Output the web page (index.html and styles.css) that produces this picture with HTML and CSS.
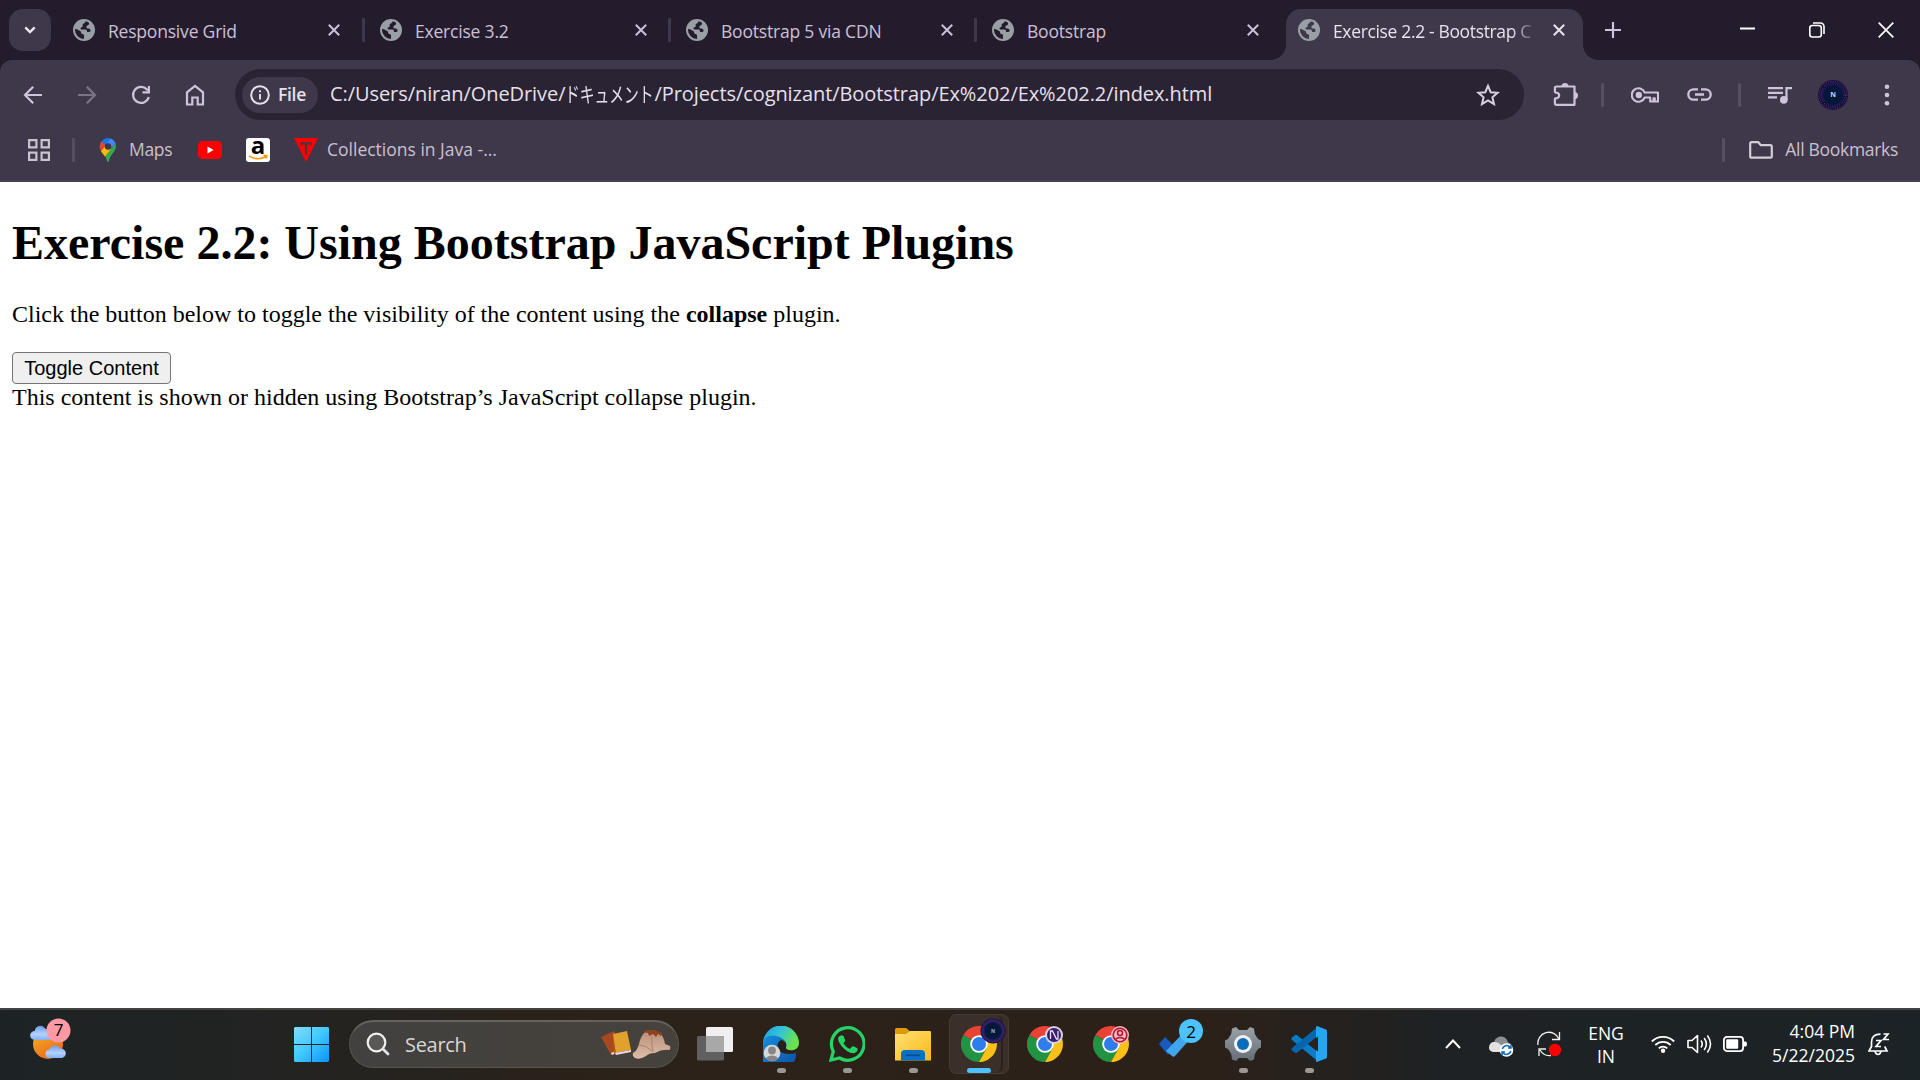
FILE: index.html
```html
<!DOCTYPE html>
<html lang="en">
<head>
<meta charset="utf-8">
<title>Exercise 2.2 - Bootstrap Collapse</title>
<link rel="stylesheet" href="styles.css">
</head>
<body>
<svg class="defs" width="0" height="0" aria-hidden="true">
  <defs>
    <linearGradient id="winA" x1="0" y1="0" x2="1" y2="1"><stop offset="0" stop-color="#82dcff"/><stop offset=".5" stop-color="#3fc8fd"/><stop offset="1" stop-color="#0a93f8"/></linearGradient>
    <linearGradient id="sun" x1="0" y1="0" x2=".6" y2="1"><stop offset="0" stop-color="#f5b52e"/><stop offset="1" stop-color="#ee6a12"/></linearGradient>
    <linearGradient id="cloud" x1="0" y1="0" x2="0" y2="1"><stop offset="0" stop-color="#6f9dea"/><stop offset=".6" stop-color="#b3d2fb"/><stop offset="1" stop-color="#84aef0"/></linearGradient>
    <linearGradient id="edgeTop" x1="0" y1="0" x2="1" y2=".4"><stop offset="0" stop-color="#1d9be0"/><stop offset=".5" stop-color="#33c3d8"/><stop offset="1" stop-color="#6be44a"/></linearGradient>
    <linearGradient id="edgeBody" x1="0" y1="0" x2="1" y2="1"><stop offset="0" stop-color="#1690e0"/><stop offset="1" stop-color="#0b4a9c"/></linearGradient>
    <linearGradient id="fold" x1="0" y1="0" x2="1" y2="1"><stop offset="0" stop-color="#ffe07a"/><stop offset="1" stop-color="#fcb912"/></linearGradient>
    <linearGradient id="gear" x1="0" y1="0" x2="0" y2="1"><stop offset="0" stop-color="#9aa1a7"/><stop offset="1" stop-color="#656e76"/></linearGradient>
    <linearGradient id="skin" x1="0" y1="0" x2="0" y2="1"><stop offset="0" stop-color="#b98d77"/><stop offset="1" stop-color="#dfbda9"/></linearGradient>
    <radialGradient id="ava"><stop offset="0" stop-color="#02183a"/><stop offset=".6" stop-color="#04183c"/><stop offset=".85" stop-color="#3c2270"/><stop offset="1" stop-color="#120f38"/></radialGradient>
    <symbol id="globe" viewBox="0 0 22 22"><circle cx="11" cy="11" r="10" fill="none" stroke="#98a0a6" stroke-width="2"/><path fill="#98a0a6" d="M11 1h2c-.5 2.500-1.500 3.500-3.300 4v2.300c0 1-1.700 1-2.200 1.700-.3.800.5 1.500 1.500 1.500h3.500c1.500 0 1.500 1.500 1.500 2.500h2.200c1.200 0 1.500-1 1.300-2-.3-1.200-1.500-1.500-3-1.500-1.200-.2-1.500-1.500-.8-2.500.8-1 2.300-.8 2.300-2V2.500l4 3.500 1.500 5-2 6-5 3.500-3.500.5v-3c0-1 .5-2-.5-2.500-1.500-.5-2.500-1-2.500-2.500 0-1.200-2-1-3.500-2.500L1 9.500 3 4.500 7 1.500z"/></symbol>
    <symbol id="x" viewBox="0 0 12 12"><path d="M.8.8l10.400 10.400M11.200.8L.8 11.200" stroke="currentColor" stroke-width="2" fill="none"/></symbol>
    <symbol id="chrome" viewBox="0 0 36 36"><path fill="#ea4335" d="M18 18L2.400 9A18 18 0 0 1 33.600 9z"/><path fill="#229342" d="M18 18l7.800 4.500L18 36A18 18 0 0 1 2.400 9z"/><path fill="#fbc116" d="M18 9.500h15.800A18 18 0 0 1 18 36l7.500-13.500z"/><circle cx="18" cy="18" r="8.800" fill="#fff"/><circle cx="18" cy="18" r="7" fill="#2f7ded"/></symbol>
  </defs>
</svg>

<header class="browser">
  <div class="tabstrip">
    <div class="tab-search"><svg width="12" height="8" viewBox="0 0 12 8"><path d="M1.300 1.300L6 6l4.700-4.700" fill="none" stroke="#ece6f2" stroke-width="2.400"/></svg></div>
    <div class="tab"><svg class="favicon"><use href="#globe"/></svg><span class="tab-title">Responsive Grid</span><svg class="tab-close"><use href="#x"/></svg></div>
    <i class="tab-sep"></i>
    <div class="tab"><svg class="favicon"><use href="#globe"/></svg><span class="tab-title">Exercise 3.2</span><svg class="tab-close"><use href="#x"/></svg></div>
    <i class="tab-sep"></i>
    <div class="tab"><svg class="favicon"><use href="#globe"/></svg><span class="tab-title">Bootstrap 5 via CDN</span><svg class="tab-close"><use href="#x"/></svg></div>
    <i class="tab-sep"></i>
    <div class="tab"><svg class="favicon"><use href="#globe"/></svg><span class="tab-title">Bootstrap</span><svg class="tab-close"><use href="#x"/></svg></div>
    <i class="tab-sep hidden"></i>
    <div class="tab active"><svg class="favicon"><use href="#globe"/></svg><span class="tab-title">Exercise 2.2 - Bootstrap C</span><svg class="tab-close"><use href="#x"/></svg></div>
    <svg class="new-tab" width="16" height="16" viewBox="0 0 16 16"><path d="M8 0v16M0 8h16" stroke="#cfc3dc" stroke-width="2.200"/></svg>
    <div class="window-controls">
      <svg width="15" height="15"><path d="M0 7.500h15" stroke="#fff" stroke-width="2"/></svg>
      <svg width="16" height="16" viewBox="0 0 16 16" fill="none" stroke="#fff" stroke-width="1.600"><rect x=".8" y="3.500" width="11.500" height="11.500" rx="2.500"/><path d="M4 1h7.500a3.500 3.500 0 0 1 3.500 3.500V12"/></svg>
      <svg width="16" height="16" viewBox="0 0 16 16"><path d="M.7.7l14.600 14.600M15.300.7L.7 15.300" stroke="#fff" stroke-width="1.700"/></svg>
    </div>
  </div>

  <div class="toolbar">
    <div class="nav">
      <svg width="20" height="20" viewBox="0 0 20 20"><path d="M19 10H2.500M10.200 1.800L2 10l8.200 8.200" fill="none" stroke="#cfc3dc" stroke-width="2.200"/></svg>
      <svg width="20" height="20" viewBox="0 0 20 20"><path d="M1 10h16.500M9.800 1.800L18 10l-8.200 8.200" fill="none" stroke="#7d7387" stroke-width="2.200"/></svg>
      <svg width="20" height="20" viewBox="0 0 20 20"><path d="M17.800 12A8 8 0 1 1 16 4.500l1 1" fill="none" stroke="#cfc3dc" stroke-width="2.200"/><path d="M19 1v7.500h-7.500V6.300h5.300V1z" fill="#cfc3dc"/></svg>
      <svg width="20" height="22" viewBox="0 0 20 22"><path d="M2 20.500V8.300L10 2l8 6.300v12.200h-5.300v-7H7.300v7z" fill="none" stroke="#cfc3dc" stroke-width="2.200"/></svg>
    </div>
    <div class="omnibox">
      <div class="chip"><svg width="20" height="20" viewBox="0 0 20 20"><circle cx="10" cy="10" r="8.800" fill="none" stroke="#e7e0ec" stroke-width="2"/><path d="M10 9v5.500M10 5.200v2" stroke="#e7e0ec" stroke-width="1.900"/></svg><span>File</span></div>
      <div class="url">C:/Users/niran/OneDrive/<span class="kana"><span>ドキュメント</span></span>/Projects/cognizant/Bootstrap/Ex%202/Ex%202.2/index.html</div>
      <svg class="star" width="24" height="24" viewBox="0 0 24 24"><path d="M12 2.800l2.700 6.400 6.900.6-5.200 4.500 1.600 6.800-6-3.600-6 3.600 1.600-6.800-5.200-4.500 6.900-.6z" fill="none" stroke="#d9d0e0" stroke-width="2"/></svg>
    </div>
    <div class="actions">
      <svg class="puzzle" width="26" height="26" viewBox="0 0 26 26"><path d="M3.500 4.500h18v18.300h-18q-1.600 0-1.600-1.600v-4.500q4.300-.8 4.300-3.300t-4.300-3.300V6q0-1.500 1.600-1.500z" fill="none" stroke="#cfc3dc" stroke-width="2.200" stroke-linejoin="round"/><path d="M8.500 4.500a3.500 3.500 0 0 1 7 0zM21.500 10a3.500 3.500 0 0 1 0 7z" fill="#cfc3dc"/></svg>
      <i class="bar-sep"></i>
      <svg class="key" width="28" height="16" viewBox="0 0 28 16"><path d="M13.700 5.500A6.700 6.700 0 1 0 13.700 10.500h5.500v4h3.300v-3.200h1.300v3.200H27v-9z" fill="none" stroke="#cfc3dc" stroke-width="2.100" stroke-linejoin="round"/><circle cx="7.800" cy="8" r="3.200" fill="#cfc3dc"/></svg>
      <svg class="link" width="25" height="13" viewBox="0 0 25 13"><path d="M11 1.300H6.500a5.200 5.200 0 0 0 0 10.400H11M14 1.300h4.500a5.200 5.200 0 0 1 0 10.400H14M8 6.500h9" fill="none" stroke="#cfc3dc" stroke-width="2.300"/></svg>
      <i class="bar-sep"></i>
      <svg class="media" width="24" height="18" viewBox="0 0 24 18"><path d="M0 2.200h15M0 6.800h15M0 11.400h9M18.500 14V2.200H24" fill="none" stroke="#cfc3dc" stroke-width="2.200"/><circle cx="15.800" cy="13.900" r="3.800" fill="#cfc3dc"/></svg>
      <svg class="avatar" width="30" height="30" viewBox="0 0 30 30"><circle cx="15" cy="15" r="15" fill="#120f38"/><circle cx="15" cy="15" r="9.500" fill="#02183a"/><g fill="none" stroke="#6d3292" stroke-width="1" stroke-dasharray="1 1.300"><circle cx="15" cy="15" r="13.800"/><circle cx="15" cy="15" r="12"/><circle cx="15" cy="15" r="10.300" stroke="#35377c"/></g><text x="15" y="17.200" text-anchor="middle" class="avatar-n">N</text></svg>
      <svg class="dots" width="6" height="22" viewBox="0 0 6 22" fill="#cfc3dc"><circle cx="3" cy="2.700" r="2.300"/><circle cx="3" cy="11" r="2.300"/><circle cx="3" cy="19.300" r="2.300"/></svg>
    </div>
  </div>

  <div class="bookmarks">
    <svg class="apps-icon" width="22" height="22" viewBox="0 0 22 22" fill="none" stroke="#c9c1cd" stroke-width="2.200"><path d="M1.100 1.100h7.300v7.300H1.100zM13.600 1.100h7.300v7.300h-7.300zM1.100 13.600h7.300v7.300H1.100zM13.600 13.600h7.300v7.300h-7.300z"/></svg>
    <i class="bar-sep"></i>
    <div class="bm maps">
      <svg width="18" height="24" viewBox="0 0 18 24"><path fill="#34a853" d="M16.500 5.500c1.500 5-1 8-4 11.500-1.500 2-2 4-2.500 6q-1 2-2 0c-.5-2-1-3.500-2-5z"/><path fill="#fbbc04" d="M1.800 13L6 8l6 3-6 7.500Q3.500 15.500 1.800 13z"/><path fill="#ea4335" d="M2.500 3.200L7 7l-5 6C0 9.500.3 6 2.500 3.200z"/><path fill="#1a73e8" d="M2.500 3.200A8.200 8.200 0 0 1 11.500.5L6.200 7.300z"/><path fill="#4285f4" d="M11.500.5q3.800 1.300 5.200 5.200L11 11 7 6z"/><circle cx="9" cy="8.500" r="3.200" fill="#3f374a"/></svg>
      <span>Maps</span>
    </div>
    <svg class="yt" width="24" height="18" viewBox="0 0 24 18"><rect width="24" height="18" rx="4.500" fill="#f00"/><path d="M9.500 5.500v7L15.500 9z" fill="#fff"/></svg>
    <svg class="amazon" width="24" height="24" viewBox="0 0 24 24"><rect width="24" height="24" rx="3" fill="#fff"/><text x="12" y="15.500" text-anchor="middle" class="amazon-a">a</text><path d="M3 17.800q8.500 5.500 17 .7M17.500 17.300l3.300.3-.8 3" fill="none" stroke="#ff9900" stroke-width="1.600"/></svg>
    <div class="bm java">
      <svg width="24" height="24" viewBox="0 0 24 24"><path d="M0 0h24L12 24z" fill="#f00"/><path d="M6.500 5.300h11M12 5v11.500" stroke="#4c3340" stroke-width="2.200" fill="none"/><path d="M7 4.500v3M17 4.500v3" stroke="#4c3340"/></svg>
      <span>Collections in Java -...</span>
    </div>
    <div class="all">
      <i class="bar-sep"></i>
      <svg width="24" height="18" viewBox="0 0 24 18"><path d="M2.500 1.200h6.800l2.500 2.900h9.700q1.300 0 1.300 1.300v10q0 1.300-1.300 1.300h-19q-1.300 0-1.300-1.300V2.500q0-1.300 1.300-1.300z" fill="none" stroke="#d4ccd8" stroke-width="2.200"/></svg>
      <span>All Bookmarks</span>
    </div>
  </div>
</header>

<main class="page">
  <h1>Exercise 2.2: Using Bootstrap JavaScript Plugins</h1>
  <p>Click the button below to toggle the visibility of the content using the <strong>collapse</strong> plugin.</p>
  <button class="toggle" type="button">Toggle Content</button>
  <div>This content is shown or hidden using Bootstrap’s JavaScript collapse plugin.</div>
</main>

<footer class="taskbar">
  <svg class="weather" width="42" height="44" viewBox="0 0 42 44">
    <circle cx="18" cy="26" r="15" fill="url(#sun)"/>
    <path d="M4.500 22a4.500 4.500 0 0 1 .3-9A5.500 5.500 0 0 1 15 10.500q8 2 8 11.500z" fill="url(#cloud)"/>
    <path d="M19 40a4.300 4.300 0 0 1 .2-8.500 6 6 0 0 1 11-.8A4.700 4.700 0 0 1 32 40z" fill="url(#cloud)"/>
    <circle cx="28.500" cy="12.500" r="12" fill="#ff99a4"/><text x="28.500" y="18" text-anchor="middle" class="badge-text">7</text>
  </svg>
  <svg class="start" width="35" height="35" viewBox="0 0 35 35" fill="url(#winA)"><path d="M1 0h16v17H0V1zM18 0h16l1 1v16H18zM0 18h17v17H1l-1-1zM18 18h17v16l-1 1H18z"/></svg>
  <div class="search">
    <svg width="24" height="24" viewBox="0 0 24 24"><circle cx="10.500" cy="10.500" r="8.800" fill="#5a5856" stroke="#f0f0f0" stroke-width="2.200"/><path d="M17 17l5 5" stroke="#e2e4ea" stroke-width="2.800" stroke-linecap="round"/></svg>
    <span>Search</span>
    <svg class="art" width="72" height="32" viewBox="0 0 72 32">
      <path d="M1 9L14 3l9 17-12 7z" fill="#a8481f"/><path d="M11 25l11-5 1 2-11 5z" fill="#f1dccb"/>
      <path d="M13 6l14-3 4 19-16 3z" fill="#e2a02c"/><path d="M13 6l3 19-2 1z" fill="#a8651c"/><path d="M15 25l16-3v2l-15 3z" fill="#ecd5e8"/>
      <path d="M33 25q4-2 6-9Q42 2 52 2q11 1 13 14l5 2q1 3-1 4-7-1-14 3-6 0-9 3-6 4-11 2-3-2-2-5z" fill="url(#skin)"/>
      <path d="M52 8q-1 8 1 16M39 17q7 0 13 6" stroke="#a98370" fill="none"/><path d="M43 4q8-5 19 1l-1 3-3-2-2 3-3-3-4 2-1-3z" fill="#8a431e"/>
    </svg>
  </div>
  <nav class="apps">
    <div class="app"><svg width="36" height="36" viewBox="0 0 36 36"><rect x="9" y="1" width="27" height="25" rx="1.500" fill="#efefef"/><rect x="0" y="10" width="27" height="24.500" rx="1.500" fill="#606060"/><path d="M9 10h16.500q1.500 0 1.500 1.500V26H9z" fill="#a8a8a8"/></svg></div>
    <div class="app running"><svg width="36" height="36" viewBox="0 0 36 36"><path d="M0 18A18 18 0 0 1 36 17c0 5-4 7.500-8 7.500-4 0-5.500-1-5-3 2-5-3-10-10-10S1 14 0 18z" fill="url(#edgeTop)"/><path d="M0 18C0 11 7 8.500 13 10c6 1 10 5 9 9-2-4-7-2-7 2 0 6 9 8.500 18 6A18 18 0 1 1 0 18z" fill="url(#edgeBody)"/><path d="M18 14q5 1 4.500 6.500-.5 3 5.500 4 3 0 5-1.500-1 4-6 4-11-.5-12.500-6.500 0-5 3.500-6.500z" fill="#262019"/><circle cx="9" cy="27" r="8.300" fill="#d8d8d8"/><circle cx="9" cy="24.500" r="3.900" fill="#868686"/><path d="M2.800 32.500q2-3 6.200-3t6.200 3Q12.800 35.300 9 35.300t-6.200-2.800z" fill="#868686"/></svg></div>
    <div class="app running"><svg width="36" height="36" viewBox="0 0 36 36"><path d="M2 34l2.300-8.500A16.300 16.300 0 1 1 10.500 32z" fill="none" stroke="#25d366" stroke-width="3.200"/><path d="M11.500 9.500h2q.8 0 1.200 1l1.500 3.500q.2.800-.4 1.500l-1.400 1.700q2.400 4 6.500 5.800l2-2.300q.7-.8 1.500-.4l3.500 1.700q.8.400.7 1.300-.4 3.700-4.600 4Q19 27.500 12.500 20 6 11.500 11.500 9.500z" fill="#25d366"/></svg></div>
    <div class="app running"><svg width="36" height="36" viewBox="0 0 36 36"><path d="M0 3.500Q0 2 1.500 2h9q1 0 1.700.7L15 5.500 12 9H0z" fill="#dd9b07"/><path d="M0 8h11l4-3h20q1 0 1 1v28.500H0z" fill="url(#fold)"/><path d="M6 34.500V28q0-4 4-4h16q4 0 4 4v6.500z" fill="#0d6fc4"/><path d="M11 29.300h14" stroke="#084b8a" stroke-width="1.500"/></svg></div>
    <div class="app current"><div class="window-stack"><div class="window-front"><svg width="46" height="44" viewBox="0 0 46 44"><use href="#chrome" x="0" y="8" width="36" height="36"/><circle cx="32" cy="13" r="12.500" fill="url(#ava)"/><text x="32" y="15" text-anchor="middle" class="mini-n">N</text></svg></div></div></div>
    <div class="app"><svg width="36" height="36" viewBox="0 0 36 36"><use href="#chrome" width="36" height="36"/><circle cx="27" cy="9" r="9" fill="#d8d3e4"/><circle cx="27" cy="9" r="7" fill="#3b1c6b"/><path d="M23.500 13V5h2l4 8h1.500V5" fill="none" stroke="#e8e0f4" stroke-width="1.300"/></svg></div>
    <div class="app"><svg width="36" height="36" viewBox="0 0 36 36"><use href="#chrome" width="36" height="36"/><circle cx="27" cy="9" r="9" fill="#f6b9c4"/><circle cx="27" cy="9" r="6.800" fill="none" stroke="#b3122d" stroke-width="1.600"/><circle cx="27" cy="7" r="2.500" fill="none" stroke="#b3122d" stroke-width="1.500"/><path d="M22 13.500q5-4 10 0" fill="none" stroke="#b3122d" stroke-width="1.600"/></svg></div>
    <div class="app todo"><svg width="45" height="44" viewBox="0 0 45 44"><path d="M0 26l6-7 9 9-6 9z" fill="#185abd"/><path d="M7 33L25 14l7 6-16 18q-1.500 1.500-3 0z" fill="#41a5ee"/><circle cx="32" cy="13" r="12" fill="#4cc2ff"/><text x="32" y="19.500" text-anchor="middle" class="badge-text">2</text></svg></div>
    <div class="app running"><svg width="36" height="36" viewBox="0 0 36 36"><path d="M7 2.500l4-1.500 3 3h8l3-3 4 1.500.8 5.500 3.200 5 3 1.500v7L33 23l-3.200 5-.8 5.500-4 1.500-3-3h-8l-3 3-4-1.500L6.200 28 3 23l-3-1.500v-7L3 13l3.200-5z" fill="url(#gear)"/><circle cx="18" cy="18" r="9" fill="#f2f2f2"/><circle cx="18" cy="18" r="6" fill="#0f6cbd"/></svg></div>
    <div class="app running"><svg width="36" height="36" viewBox="0 0 36 36"><path d="M1 11.500L4 9.200q1-.7 2 0L27 26v9.500L1 14q-1.300-1.300 0-2.500z" fill="#0a7dc9"/><path d="M1 24.500L4 26.800q1 .7 2 0L27 10V.5L1 22q-1.300 1.300 0 2.500z" fill="#0765ae"/><path d="M26 0l9 3.500q1 .5 1 1.500v26q0 1-1 1.500L26 36q-1 0-1-1V1q0-1 1-1z" fill="#25a6f2"/><path d="M27 10.500v15L17 18z" fill="#2c211a"/></svg></div>
  </nav>
  <div class="tray">
    <svg class="chev" width="16" height="10" viewBox="0 0 16 10"><path d="M1 9l7-7.500L15 9" fill="none" stroke="#fff" stroke-width="2"/></svg>
    <svg class="drive" width="25" height="22" viewBox="0 0 25 22"><path d="M5 7Q7 1 13 1.500q5 1 6 6 4 1 4 5l-5 4H4q-4-1-4-4.500Q1 7 5 7z" fill="#8b8d8f"/><path d="M5 7q4-.5 7 3l5 7H4q-4-1-4-4.500Q1 7 5 7z" fill="#e2e2e2"/><circle cx="17.500" cy="15" r="6.800" fill="#fff"/><path d="M13.300 14a4.500 4.500 0 0 1 8-1.500M21.800 16a4.500 4.500 0 0 1-8 1.500M22 10v3h-3M13 20v-3h3" fill="none" stroke="#0f6cbd" stroke-width="1.500"/></svg>
    <svg class="sync" width="25" height="26" viewBox="0 0 25 26"><path d="M1 14A11 11 0 0 1 22 8M22.500 1v7.500H15M14 24.500Q7 25.500 3 19M2 25v-7h7" fill="none" stroke="#f0f0f0" stroke-width="1.300"/><circle cx="18" cy="19" r="6.200" fill="#f00"/></svg>
    <div class="lang">ENG<br>IN</div>
    <svg class="wifi" width="24" height="18" viewBox="0 0 24 18" fill="none" stroke="#fff" stroke-width="1.800"><path d="M.8 6.500a15.800 15.800 0 0 1 22.400 0M4.300 10a10.900 10.900 0 0 1 15.400 0M7.700 13.300a6.100 6.100 0 0 1 8.600 0"/><circle cx="12" cy="15.800" r="1.300" fill="#fff"/></svg>
    <svg class="vol" width="25" height="20" viewBox="0 0 25 20" fill="none" stroke="#fff" stroke-width="1.600"><path d="M1 6.500h4l5.500-5v17L5 13.500H1z" stroke-linejoin="round"/><path d="M14 6.500q2.500 3.500 0 7M17.200 4q4.300 6 0 12M20.400 1.500q6.300 8.500 0 17"/></svg>
    <svg class="batt" width="24" height="16" viewBox="0 0 24 16"><rect x=".9" y=".9" width="19.200" height="14.200" rx="3" fill="none" stroke="#fff" stroke-width="1.800"/><rect x="3.200" y="3.200" width="12" height="9.600" rx="1" fill="#fff"/><path d="M21 5.500h1.500q1.500 0 1.500 2.500t-1.500 2.500H21z" fill="#fff"/></svg>
    <div class="clock">4:04 PM<br>5/22/2025</div>
    <svg class="bell" width="22" height="24" viewBox="0 0 22 24" fill="none" stroke="#fff" stroke-width="1.700"><path d="M12.500 2.200Q3.500 2 3.500 10v4.500L1 19h18l-2.300-4.500M7 19.500q1 3 3 3t3-3"/><path d="M8 8.500h5L8 14.500h5M15.500 2H20l-4.500 5.500H21"/></svg>
  </div>
</footer>
</body>
</html>
```
FILE: styles.css
```css
* { box-sizing: border-box; }
body {
  margin: 0;
  width: 1920px;
  height: 1080px;
  overflow: hidden;
  display: flex;
  flex-direction: column;
  background: #fff;
  font-family: "Open Sans", "Noto Sans", "Noto Sans CJK JP", sans-serif;
}
svg { display: block; flex: none; }
.defs { position: absolute; }

/* Browser chrome */
.browser {
  height: 182px;
  flex: none;
  background: #241c2d;
  font-size: 17.5px;
  letter-spacing: -0.3px;
}
.tabstrip {
  height: 60px;
  display: flex;
  padding: 9px 26px 0 9px;
  color: #cbc0d6;
  letter-spacing: -0.2px;
}
.tab-search {
  width: 42px;
  height: 42px;
  margin-right: 11px;
  border-radius: 14px;
  background: #3f374a;
  display: grid;
  place-items: center;
}
.tab {
  width: 297px;
  height: 51px;
  flex: none;
  display: flex;
  align-items: center;
  padding: 0 0 9px 11px;
}
.tab-sep + .tab { padding-left: 12px; }
.favicon { width: 22px; height: 22px; margin-right: 13px; }
.tab-title {
  width: 210px;
  padding-top: 1px;
  line-height: 24px;
  white-space: nowrap;
}
.tab-close { width: 12px; height: 12px; margin-left: 10px; }
.tab-sep { width: 3px; height: 24px; margin: 9px 3px; flex: none; border-radius: 1px; background: #3f374a; }
.tab-sep.hidden { background: none; }
.tab.active {
  position: relative;
  background: #3f374a;
  border-radius: 15px 15px 0 0;
  color: #e8e2ec;
}
.tab.active .tab-title {
  -webkit-mask-image: linear-gradient(90deg, #000 178px, transparent 205px);
  mask-image: linear-gradient(90deg, #000 178px, transparent 205px);
  letter-spacing: -0.35px;
}
.tab.active::before,
.tab.active::after {
  content: "";
  position: absolute;
  bottom: 0;
  width: 15px;
  height: 15px;
}
.tab.active::before { left: -15px; background: radial-gradient(circle at 0 0, transparent 14.5px, #3f374a 15px); }
.tab.active::after { right: -15px; background: radial-gradient(circle at 100% 0, transparent 14.5px, #3f374a 15px); }
.new-tab { margin: 13px 0 0 22px; }
.window-controls { display: flex; gap: 53.5px; margin: 13px 0 0 auto; }
.window-controls svg:first-child { margin-top: -1px; }

.toolbar {
  height: 69px;
  display: flex;
  align-items: center;
  background: #3f374a;
  border-radius: 12px 12px 0 0;
}
.nav { display: flex; align-items: center; gap: 34px; width: 235px; padding-left: 23px; }
.omnibox {
  width: 1289px;
  height: 51px;
  display: flex;
  align-items: center;
  padding: 0 24px 0 7px;
  border-radius: 26px;
  background: #2a2333;
  color: #e7e0ec;
}
.chip {
  width: 76px;
  height: 36px;
  display: flex;
  align-items: center;
  gap: 8px;
  padding-left: 8px;
  border-radius: 18px;
  background: #3f374a;
  font-weight: 600;
  line-height: 24px;
}
.chip span { margin-top: -1px; }
.url { margin-left: 12px; font-size: 20px; letter-spacing: -0.07px; white-space: nowrap; line-height: 30px; display: flex; }
.kana { width: 89px; }
.kana span { display: inline-block; font-size: 21px; transform: scaleX(0.705); transform-origin: 0 50%; }
.star { margin-left: auto; }
.actions { display: flex; align-items: center; }
.bar-sep { width: 3px; height: 24px; flex: none; border-radius: 1px; background: #574e62; }
.puzzle { margin: 0 22px 0 29px; }
.key { margin-left: 27px; }
.link { margin: 0 26px 0 28px; }
.media { margin: 0 26px 0 27px; }
.dots { margin-left: 36px; }
.avatar-n { font: 700 7px "Open Sans", sans-serif; fill: #cfd3e6; }
.mini-n { font: 700 5px "Open Sans", sans-serif; fill: #a9b0cc; }

.bookmarks {
  height: 53px;
  display: flex;
  align-items: center;
  padding: 0 22px 9px 28px;
  background: #3f374a;
  border-bottom: 2px solid #4a4451;
  color: #c9c1cd;
  line-height: 24px;
}
.bookmarks > .bar-sep { margin: 0 24px 0 22px; }
.bookmarks span { margin-top: -2px; }
.bm { display: flex; align-items: center; }
.maps { gap: 12px; width: 99px; }
.yt { margin-right: 24px; }
.java { margin-left: 24px; gap: 9px; letter-spacing: 0; }
.amazon-a { font: 700 24px "Open Sans", sans-serif; fill: #000; letter-spacing: 0; }
.all { margin-left: auto; display: flex; align-items: center; }
.all svg { margin: 0 12px 0 24px; }

/* Page */
.page {
  flex: 1;
  padding: 0 12px;
  font: 24px "Liberation Serif", serif;
  color: #000;
}
.page h1 { margin: 33px 0 31px; font-size: 48px; line-height: 55px; }
.page p { margin: 0 0 24px; line-height: 27px; }
.toggle {
  display: block;
  width: 159px;
  height: 32px;
  padding: 0;
  border: 1px solid #767676;
  border-radius: 4px;
  background: #efefef;
  font: 20px "Liberation Sans", sans-serif;
  color: #000;
}

/* Taskbar */
.taskbar {
  height: 72px;
  flex: none;
  display: flex;
  align-items: center;
  padding: 0 0 2px 30px;
  border-top: 2px solid #45433f;
  background: linear-gradient(90deg, #1d2325 0, #222322 260px, #2b2219 600px, #2c2119 1200px, #222120 1380px, #1e2224 1440px, #1c2326 1920px);
  color: #fff;
}
.weather { margin-top: -9px; }
.badge-text { font: 17px "Open Sans", sans-serif; fill: #000; }
.start { margin-left: 222px; }
.search {
  width: 330px;
  height: 48px;
  margin-left: 20px;
  display: flex;
  align-items: center;
  padding: 0 6px 1px 16px;
  border: 1px solid #57534f;
  border-top: 2px solid #65625e;
  border-radius: 24px;
  background: linear-gradient(90deg, #42413f, #46413b);
  font-size: 20px;
  letter-spacing: -0.3px;
  color: #d8d7d5;
}
.search span { margin-left: 15px; }
.art { margin-left: auto; }
.apps { display: flex; margin-left: 3px; height: 68px; }
.app { position: relative; width: 66px; display: flex; justify-content: center; align-items: center; }
.app.running::after,
.app.current::after {
  content: "";
  position: absolute;
  left: 29px;
  top: 58px;
  width: 9px;
  height: 5px;
  border-radius: 3px;
  background: #9c9793;
}
.app.current::after { left: 21px; width: 24px; background: #4cc2ff; }
.app.current { justify-content: flex-start; padding-left: 3px; }
.window-stack { width: 60px; height: 60px; border-radius: 7px; background: #3a3029; border: 1px solid #453b34; }
.window-front { width: 53px; height: 58px; padding: 3px 0 0 11px; border-radius: 7px; background: #3a3029; border-right: 2px solid #2a211b; }
.app.todo { justify-content: flex-start; padding: 0 0 8px 15px; }
.tray {
  margin-left: auto;
  display: flex;
  align-items: center;
  padding-right: 30px;
  font-size: 17.5px;
}
.drive { margin-left: 28px; margin-top: 3px; }
.sync { margin-left: 23px; }
.lang { width: 60px; margin: 1px 15px 0 14px; text-align: center; line-height: 23px; }
.vol { margin: 0 11px 0 12px; }
.clock { width: 108px; text-align: right; line-height: 24px; margin: -2px 13px 0 0; }
```
